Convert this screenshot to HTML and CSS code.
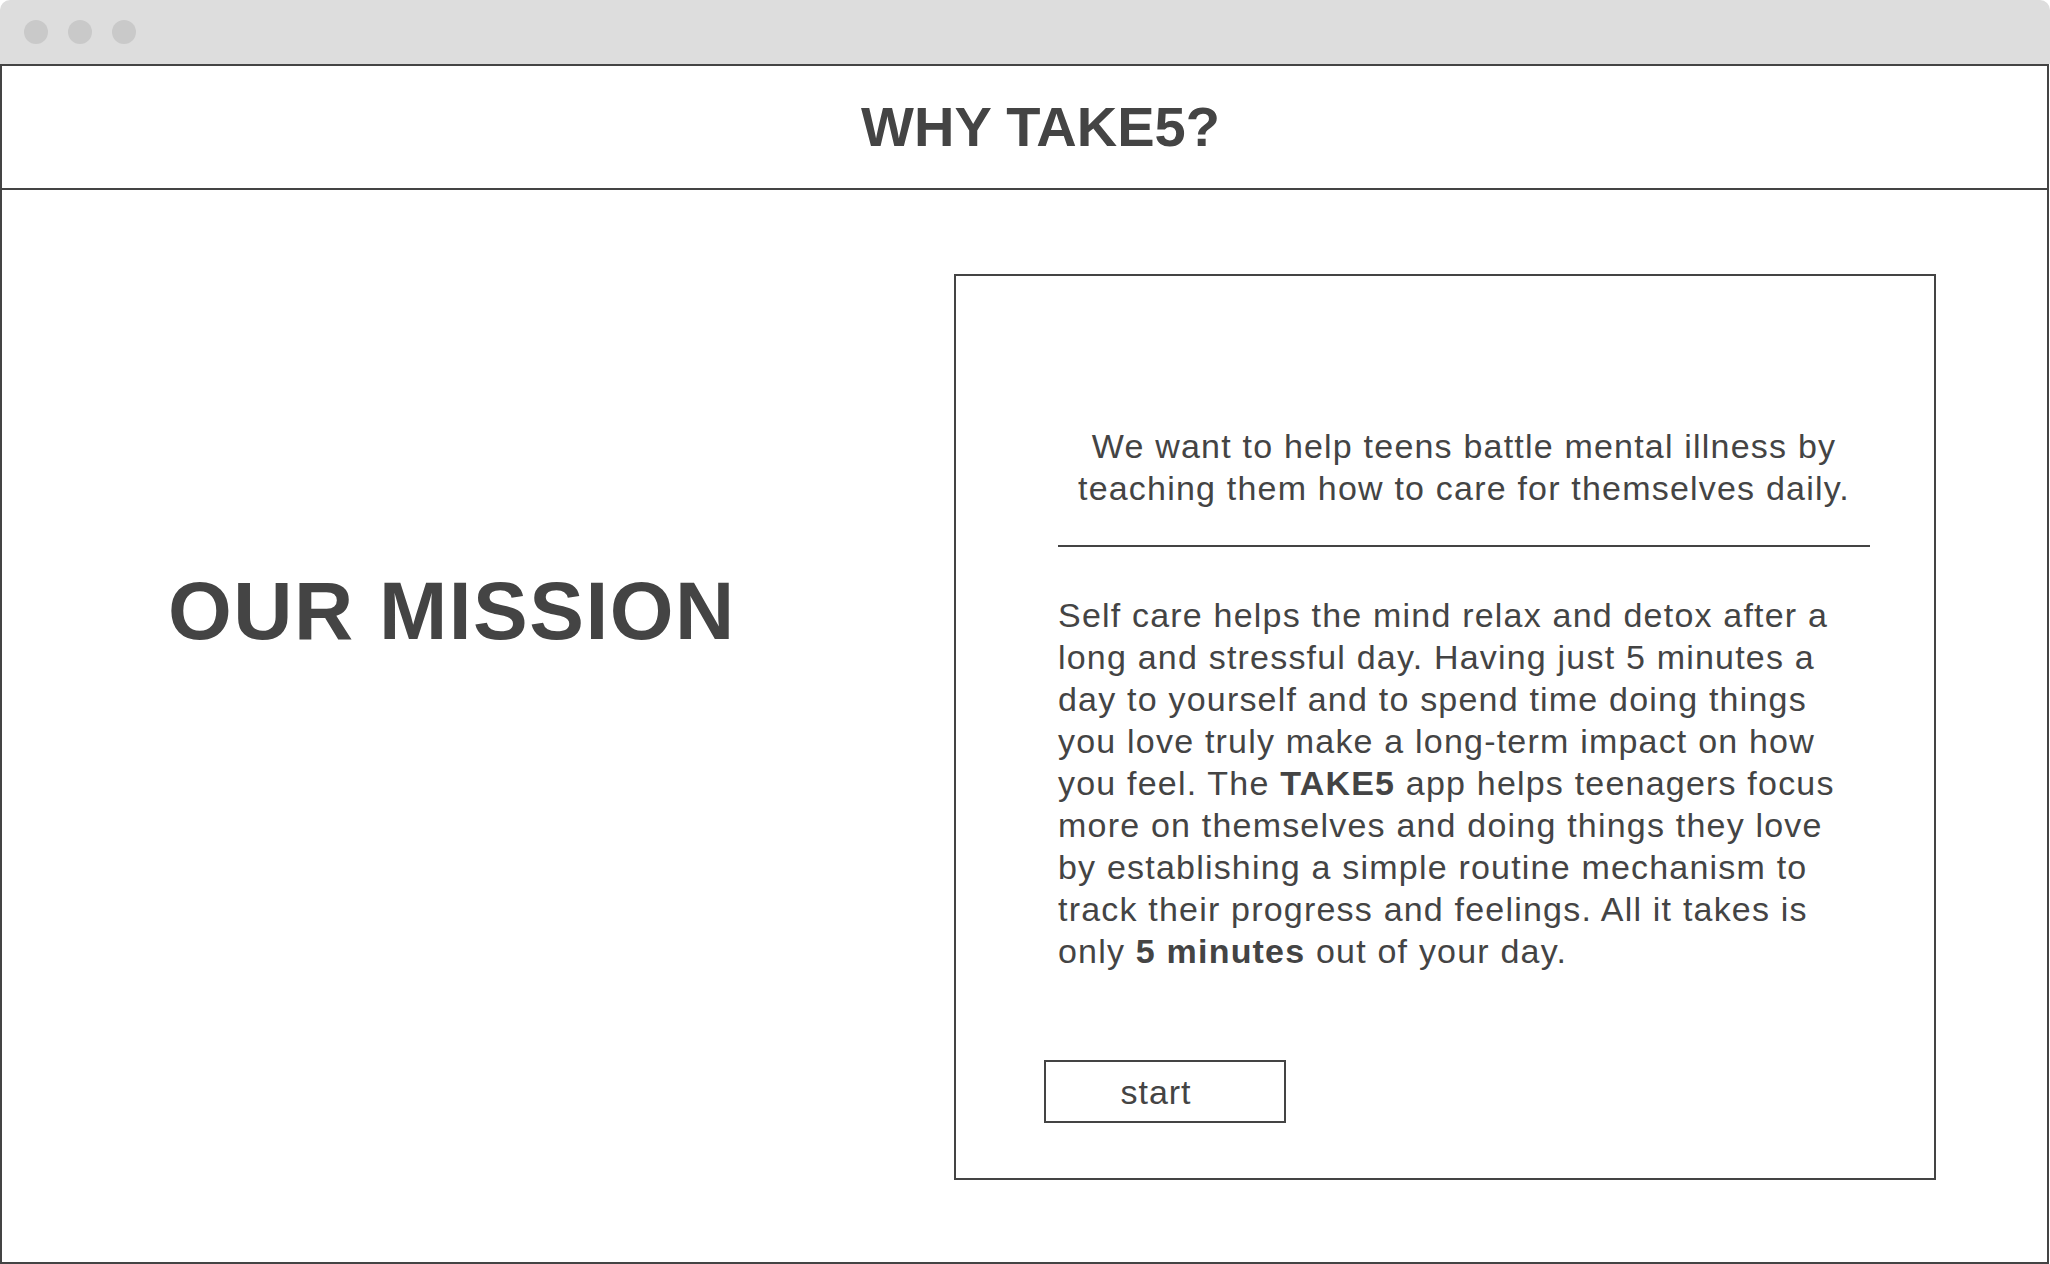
FILE: index.html
```html
<!DOCTYPE html>
<html lang="en">
<head>
<meta charset="utf-8">
<title>Why Take5?</title>
<link rel="stylesheet" href="styles.css">
</head>
<body>
<div class="window">
  <div class="titlebar">
    <span class="dot"></span>
    <span class="dot"></span>
    <span class="dot"></span>
  </div>
  <div class="frame">
    <header class="header">
      <h1 class="page-title">WHY TAKE5?</h1>
    </header>
    <main class="content">
      <div class="left">
        <h2 class="mission">OUR MISSION</h2>
      </div>
      <section class="card">
        <div class="card-col">
          <p class="lead">We want to help teens battle mental illness by teaching them how to care for themselves daily.</p>
          <hr class="divider">
          <p class="body-text">Self care helps the mind relax and detox after a long and stressful day. Having just 5 minutes a day to yourself and to spend time doing things you love truly make a long-term impact on how you feel. The <b>TAKE5</b> app helps teenagers focus more on themselves and doing things they love by establishing a simple routine mechanism to track their progress and feelings. All it takes is only <b>5 minutes</b> out of your day.</p>
          <button class="start-btn" type="button">start</button>
        </div>
      </section>
    </main>
  </div>
</div>
</body>
</html>
```

FILE: styles.css
```css
* { box-sizing: border-box; }

html, body {
  margin: 0;
  padding: 0;
  background: #ffffff;
}

body {
  font-family: "Liberation Sans", Arial, sans-serif;
  color: #444444;
}

.window {
  width: 2050px;
  height: 1264px;
  display: flex;
  flex-direction: column;
}

.titlebar {
  height: 64px;
  background: #dddddd;
  border-radius: 10px 10px 0 0;
  display: flex;
  align-items: center;
  gap: 20px;
  padding-left: 24px;
}

.dot {
  width: 24px;
  height: 24px;
  border-radius: 50%;
  background: #c9c9c9;
}

.frame {
  flex: 1;
  border: 2px solid #444444;
  display: flex;
  flex-direction: column;
  width: 2049px;
}

.header {
  height: 124px;
  border-bottom: 2px solid #444444;
  display: flex;
  align-items: center;
  justify-content: center;
  padding-left: 32px;
}

.page-title {
  margin: 0;
  font-size: 56px;
  font-weight: 700;
  line-height: 1;
  letter-spacing: 0;
}

.content {
  flex: 1;
  display: flex;
  padding: 84px 111px 82px 0;
}

.left {
  flex: 1;
  padding-left: 166px;
}

.mission {
  margin: 296px 0 0 0;
  font-size: 82px;
  font-weight: 700;
  line-height: 1;
  letter-spacing: 1.5px;
}

.card {
  width: 982px;
  border: 2px solid #444444;
  padding: 149px 0 0 102px;
}

.card-col {
  width: 812px;
}

.lead {
  margin: 0;
  font-size: 34px;
  line-height: 42px;
  letter-spacing: 1.2px;
  text-align: center;
}

.divider {
  margin: 36px 0 0 0;
  border: 0;
  border-top: 2px solid #444444;
  height: 0;
}

.body-text {
  margin: 47px 0 0 0;
  width: 792px;
  font-size: 34px;
  line-height: 42px;
  letter-spacing: 1.2px;
}

.body-text b {
  font-weight: 700;
}

.start-btn {
  display: block;
  margin: 88px 0 0 -14px;
  width: 242px;
  height: 63px;
  border: 2px solid #444444;
  background: #ffffff;
  color: #444444;
  font-family: "Liberation Sans", Arial, sans-serif;
  font-size: 34px;
  letter-spacing: 1px;
  padding: 0 18px 0 0;
  line-height: 1;
}
```
